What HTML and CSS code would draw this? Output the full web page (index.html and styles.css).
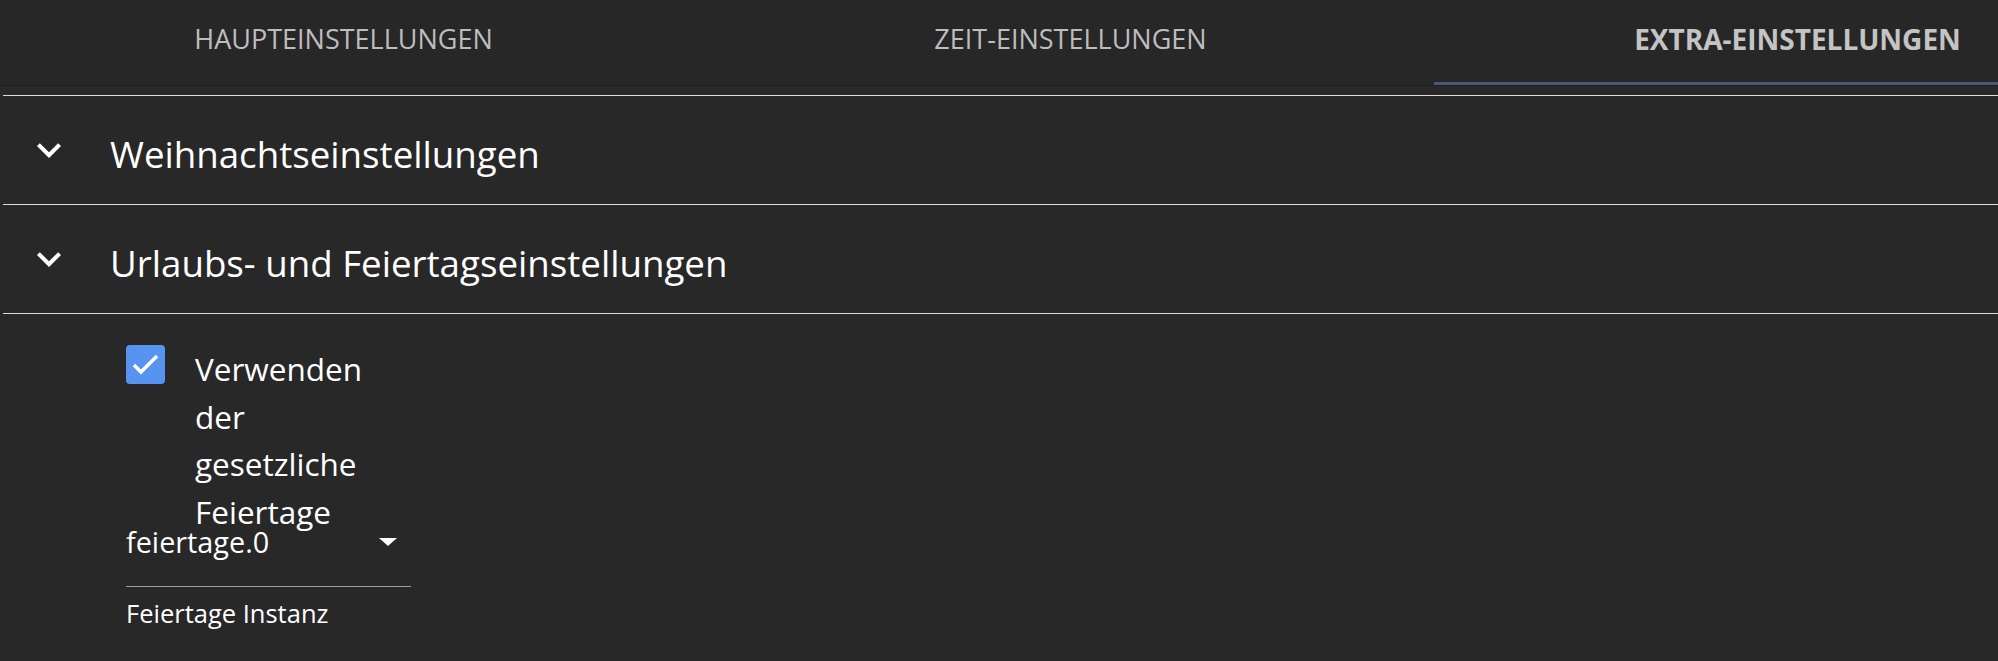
FILE: index.html
```html
<!DOCTYPE html>
<html lang="de">
<head>
    <meta charset="UTF-8">
    <meta name="viewport" content="width=device-width, initial-scale=1.0">
    <title>Extra-Einstellungen</title>
    <link rel="stylesheet" href="styles.css">
</head>
<body>
    <div class="tabs">
        <div class="tab-list">
            <div class="tab">Haupteinstellungen</div>
            <div class="tab">Zeit-Einstellungen</div>
            <div class="tab active">Extra-Einstellungen</div>
        </div>
    </div>

    <div class="panel">
        <div class="section">
            <div class="section-head">
                <span class="expand-icon">
                    <svg viewBox="0 0 24 24" width="48" height="48"><path d="M16.59 8.59L12 13.17 7.41 8.59 6 10l6 6 6-6z"/></svg>
                </span>
                <h2>Weihnachtseinstellungen</h2>
            </div>
        </div>

        <div class="section last">
            <div class="section-head">
                <span class="expand-icon">
                    <svg viewBox="0 0 24 24" width="48" height="48"><path d="M16.59 8.59L12 13.17 7.41 8.59 6 10l6 6 6-6z"/></svg>
                </span>
                <h2>Urlaubs- und Feiertagseinstellungen</h2>
            </div>
        </div>

        <div class="section-body">
            <label class="check">
                <span class="check-box">
                    <svg viewBox="0 0 39 39" width="39" height="39"><polyline points="8,20 15,27 31,11"/></svg>
                </span>
                <span class="check-text">Verwenden der gesetzliche Feiertage</span>
            </label>

            <div class="select">
                <div class="select-value">
                    <span>feiertage.0</span>
                    <svg viewBox="0 0 18 8" width="18" height="8"><polygon points="0,0 18,0 9,8"/></svg>
                </div>
                <div class="select-help">Feiertage Instanz</div>
            </div>
        </div>
    </div>
</body>
</html>
```

FILE: styles.css
```css
* {
    box-sizing: border-box;
}

body {
    margin: 0;
    background: #282828;
    color: #fff;
    font-family: "Open Sans", "Noto Sans", sans-serif;
    overflow: hidden;
}

/* tabs */
.tabs {
    height: 86px;
    background: #272727;
    border-bottom: 1px solid #1e1e1e;
    overflow: hidden;
}

.tab-list {
    display: flex;
    margin-left: -20px;
}

.tab {
    position: relative;
    flex: 0 0 727px;
    height: 85px;
    display: flex;
    align-items: center;
    justify-content: center;
    padding-bottom: 8px;
    font-size: 27px;
    text-transform: uppercase;
    color: #bdbdbd;
}

.tab.active {
    font-size: 28px;
    font-weight: 700;
    color: #c4c4c4;
}

.tab.active::after {
    content: "";
    position: absolute;
    left: 0;
    right: 0;
    bottom: 0;
    height: 3px;
    background: #465a78;
}

/* accordion */
.panel {
    padding: 9px 0 0 3px;
}

.section {
    border-top: 1px solid #dcdcdc;
}

.section.last {
    border-bottom: 1px solid #dcdcdc;
}

.section-head {
    height: 108px;
    display: flex;
    align-items: center;
    padding-left: 22px;
}

.expand-icon {
    width: 48px;
    height: 48px;
    fill: #fff;
}

.expand-icon svg {
    display: block;
}

.section-head h2 {
    margin: 0 0 0 37px;
    padding-top: 8px;
    font-size: 36.7px;
    font-weight: 400;
    line-height: 1.2;
}

/* body of the open section */
.section-body {
    padding: 31px 0 0 123px;
}

.check {
    display: flex;
    align-items: flex-start;
    height: 177px;
}

.check-box {
    width: 39px;
    height: 39px;
    border-radius: 4px;
    background: #5794f2;
    flex: none;
}

.check-box svg {
    display: block;
    fill: none;
    stroke: #fff;
    stroke-width: 3.5;
}

.check-text {
    width: 175px;
    margin-left: 30px;
    font-size: 31.5px;
    line-height: 47.5px;
}

.select {
    width: 285px;
}

.select-value {
    display: flex;
    align-items: center;
    justify-content: space-between;
    padding-bottom: 25px;
    border-bottom: 1px solid #9e9e9e;
    font-size: 28.8px;
    line-height: 39px;
}

.select-value svg {
    margin-right: 14px;
    fill: #fff;
}

.select-help {
    margin-top: 10px;
    font-size: 25.5px;
    line-height: 1.3;
}
```
